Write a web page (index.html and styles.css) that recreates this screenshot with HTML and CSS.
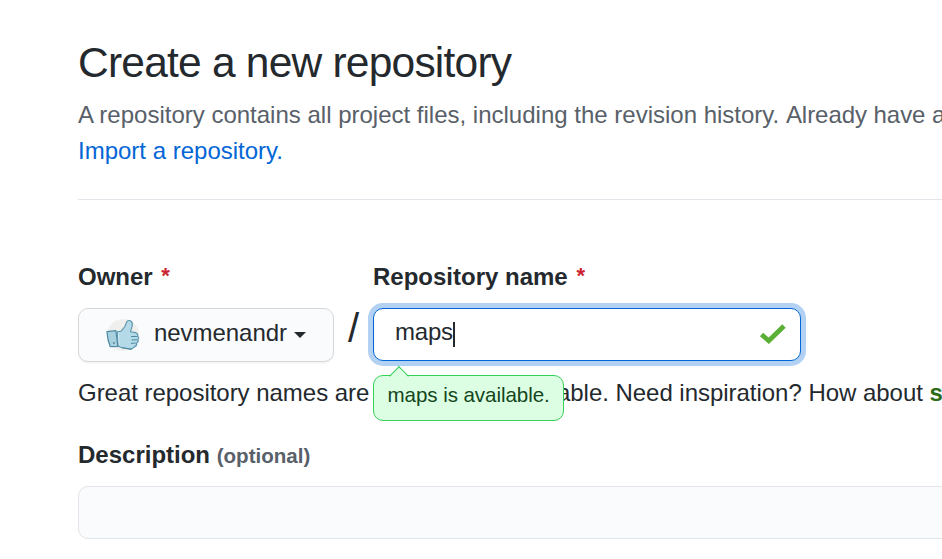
FILE: index.html
```html
<!DOCTYPE html>
<html lang="en">
<head>
<meta charset="utf-8">
<title>Create a new repository</title>
<link rel="stylesheet" href="styles.css">
</head>
<body>
<main class="page">
  <header class="subhead">
    <h1 class="title">Create a new repository</h1>
    <p class="lead">A repository contains all project files, including the revision history. <span class="question">Already have a</span><br><a class="link" href="#">Import a repository.</a></p>
  </header>
  <form class="form">
    <div class="row">
      <div class="field owner">
        <span class="label">Owner <span class="required">*</span></span>
        <button class="select" type="button">
          <svg class="avatar" viewBox="0 0 36 36" aria-hidden="true">
            <circle cx="18" cy="18" r="17" fill="#efefed"/>
            <path d="M12 14.5 L16 14 L20 9 L22 4 Q23 2 26 3 Q28.5 4.5 27.8 8 L26 14.5 L31.5 15.5 Q34.5 17 33.3 19.2 Q35.5 20.5 33.8 22.8 Q35 25 32.5 26.5 Q33 29.5 30 30.7 L26.5 33 L17 31.5 L13 30 Z" fill="#b4d9e7" stroke="#5b97ae" stroke-width="1.2" stroke-linejoin="round"/>
            <path d="M1 14.5 L10.5 13.4 L12.5 30 L4.5 30.4 Q1.5 23 1 14.5 Z" fill="#a9d0df" stroke="#4f8ba3" stroke-width="1.3" stroke-linejoin="round"/>
            <path d="M13 15.5 L14 29" stroke="#d4ecf3" stroke-width="1" fill="none"/>
            <path d="M26.5 19.5 L33 19.5 M27 23.2 L33 23 M26.5 27 L31.5 26.5 M17 31.5 L27 33" stroke="#4f8ba3" stroke-width="1.1" fill="none"/>
            <circle cx="8.3" cy="26.5" r="1" fill="#4f8ba3"/>
          </svg>
          <span class="owner-name">nevmenandr</span>
          <span class="caret"></span>
        </button>
      </div>
      <span class="slash">/</span>
      <div class="field repo">
        <span class="label">Repository name <span class="required">*</span></span>
        <div class="input focused">
          <span class="value">maps</span><span class="cursor"></span>
          <svg class="check" viewBox="0 0 30 24" aria-hidden="true"><path d="M3.5 12.5 L10.8 18.8 L26 4" fill="none" stroke="#5aaf35" stroke-width="4.8"/></svg>
        </div>
        <div class="tip">maps is available.</div>
      </div>
    </div>
    <p class="hint">Great repository names are short and memorable. Need inspiration? How about <strong class="suggestion">s</strong></p>
    <span class="label description">Description <span class="optional">(optional)</span></span>
    <div class="input wide"></div>
  </form>
</main>
</body>
</html>
```
FILE: styles.css
```css
* { box-sizing: border-box; }
html { overflow: hidden; }
body {
  margin: 0;
  background: #fff;
  color: #24292e;
  font: 24px/36px "Liberation Sans", Arial, sans-serif;
}
.page { width: 100%; height: 559px; padding: 32px 0 0 78px; overflow: hidden; }
.subhead { height: 168px; border-bottom: 1px solid #e1e4e8; }
.title { margin: 0; font-size: 42.5px; font-weight: 400; line-height: 62px; letter-spacing: -.78px; }
.lead { margin: 3px 0 0; color: #586069; white-space: nowrap; }
.question { letter-spacing: -.05px; }
.link { color: #0366d6; text-decoration: none; }
.form { padding-top: 59px; }
.row { display: flex; align-items: flex-start; }
.label { display: block; height: 36px; font-weight: 700; line-height: 36px; white-space: nowrap; }
.required { color: #cb2431; margin-left: 2px; font-size: 22px; line-height: 1; vertical-align: 2px; }
.owner { width: 256px; }
.select {
  display: flex;
  align-items: center;
  width: 256px;
  height: 54px;
  margin-top: 13px;
  padding: 0 27px;
  background: #fafbfc;
  border: 1px solid #d5d8da;
  border-radius: 10px;
  box-shadow: 0 2px 0 rgba(27, 31, 35, .04);
  color: #24292e;
  font: inherit;
}
.avatar { width: 34px; height: 34px; flex: none; margin-bottom: 1px; }
.owner-name { margin: 0 7px 4px 14px; letter-spacing: -.05px; }
.caret {
  border: 6px solid transparent;
  border-top-color: #24292e;
  border-bottom: 0;
}
.slash { width: 39px; padding: 51px 0 0 14px; font-size: 40px; line-height: 36px; }
.repo { position: relative; width: 428px; }
.input {
  display: flex;
  align-items: center;
  height: 53px;
  border: 1px solid #e1e4e8;
  border-radius: 10px;
  background: #fafbfc;
}
.focused {
  margin-top: 13px;
  padding: 0 12px 0 21px;
  background: #fff;
  border-color: #0366d6;
  box-shadow: 0 0 0 5px #b3d1f3;
}
.value { margin-bottom: 5px; letter-spacing: -.2px; }
.cursor { width: 2px; height: 25px; background: #24292e; }
.check { width: 30px; height: 24px; margin: 0 0 1px auto; }
.tip {
  position: absolute;
  top: 116px;
  left: 0;
  width: 191px;
  height: 46px;
  padding: 0 13.5px;
  background: #dcffe4;
  border: 1px solid #34d058;
  border-radius: 10px;
  color: #144620;
  font-size: 20.57px;
  line-height: 37px;
  letter-spacing: -.07px;
  white-space: nowrap;
}
.tip::before {
  content: "";
  position: absolute;
  top: -7px;
  left: 18px;
  width: 13px;
  height: 13px;
  background: linear-gradient(135deg, #dcffe4 52%, transparent 52%);
  border: solid #34d058;
  border-width: 1px 0 0 1px;
  transform: rotate(45deg);
}
.hint { margin: 13px 0 0; white-space: nowrap; letter-spacing: -.03px; }
.suggestion { color: #2a6b16; }
.description { margin-top: 26px; }
.optional { color: #586069; font-size: 20.57px; line-height: 1; }
.wide { margin: 13px -20px 0 0; }
```
